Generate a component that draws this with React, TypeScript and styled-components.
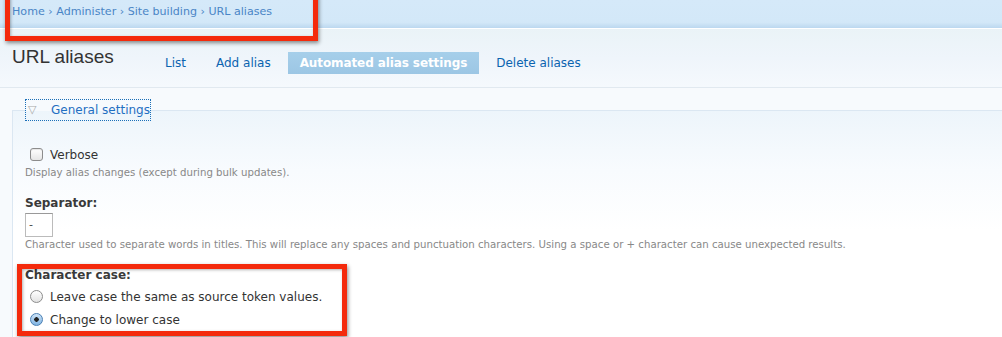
import styled, { createGlobalStyle } from 'styled-components';

const GlobalStyle = createGlobalStyle`
  html, body {
    margin: 0;
    padding: 0;
    background: #fff;
  }
  body {
    font-family: "DejaVu Sans", Verdana, sans-serif;
    color: #333;
    overflow: hidden;
  }
`;

const Page = styled.div`
  position: relative;
  width: 1002px;
  height: 337px;
  overflow: hidden;
  background: #fff;
`;

const Header = styled.div`
  height: 28px;
  border-bottom: 1px solid #fff;
  background: linear-gradient(to bottom, #d5e9f9 0%, #d3e8f8 80%, #bcd8ef 100%);
  display: flex;
  align-items: flex-start;
  padding-left: 12px;
`;

const Breadcrumb = styled.div`
  font-size: 11.1px;
  line-height: 12px;
  margin-top: 6px;
  color: #4a85c6;
`;

const TitleBar = styled.div`
  height: 58px;
  border-bottom: 1px solid #e1e9f0;
  background: linear-gradient(to bottom, #eaf3f7 0%, #eff5fb 50%, #f5f9fd 100%);
  display: flex;
  align-items: flex-start;
  padding-left: 12px;
`;

const Title = styled.h1`
  margin: 17px 0 0;
  font-family: "Liberation Sans", Arial, sans-serif;
  font-weight: normal;
  font-size: 19px;
  line-height: 22px;
  color: #333;
  width: 140px;
`;

const Tabs = styled.ul`
  list-style: none;
  margin: 23px 0 0;
  padding: 0;
  display: flex;
`;

const Tab = styled.li<{ $active?: boolean }>`
  height: 22px;
  padding: 0 ${(p) => (p.$active ? '12px' : '13px')};
  display: flex;
  align-items: center;
  font-size: 12px;
  letter-spacing: ${(p) => (p.$active ? '-0.1px' : '0')};
  color: ${(p) => (p.$active ? '#fff' : '#0b64b0')};
  font-weight: ${(p) => (p.$active ? 'bold' : 'normal')};
  background: ${(p) => (p.$active ? 'linear-gradient(to bottom, #a6cfea, #9cc6e4)' : 'transparent')};
  margin-right: 4px;
`;

const Content = styled.div`
  padding: 12px 0 0 12px;
  background: #f7fafd;
`;

const Fieldset = styled.fieldset`
  margin: 0;
  padding: 23px 0 40px 12px;
  border: none;
  border-top: 1px solid #dbe7f2;
  border-left: 1px solid #dbe7f2;
  background: linear-gradient(to bottom, #edf5fb 0px, #f8fbfe 60px, #fff 120px);
`;

const Legend = styled.legend`
  margin-left: 1px;
  padding: 3px 0 3px 2px;
  outline: 1px dotted #1a6fb8;
  font-size: 12px;
  line-height: 14px;
  color: #1f6fc2;
  display: flex;
  align-items: center;
  width: 122px;
`;

const Arrow = styled.span`
  color: #aaa;
  font-size: 11px;
  width: 23px;
`;

const Item = styled.div`
  margin-bottom: 16px;
`;

const OptionRow = styled.label`
  display: flex;
  align-items: center;
  gap: 7px;
  font-size: 12px;
  line-height: 16px;
  color: #333;
  padding-left: 5px;
  height: 23px;
`;

const Checkbox = styled.span`
  width: 11px;
  height: 11px;
  border: 1px solid #8c8c8c;
  border-radius: 3px;
  background: linear-gradient(to bottom, #fff, #e6e6e6);
  box-shadow: inset 0 1px 1px rgba(0, 0, 0, 0.1);
`;

const Radio = styled.span<{ $checked?: boolean }>`
  width: 11px;
  height: 11px;
  border: 1px solid ${(p) => (p.$checked ? '#4a7fb3' : '#8c8c8c')};
  border-radius: 50%;
  background: ${(p) =>
    p.$checked
      ? 'radial-gradient(circle, #222 0 2px, transparent 2.5px), linear-gradient(to bottom, #cfe4f7, #7fb3e2)'
      : 'linear-gradient(to bottom, #fff, #e2e2e2)'};
`;

const Description = styled.div`
  font-size: 10.2px;
  line-height: 13px;
  color: #888;
`;

const Label = styled.div`
  font-size: 12px;
  line-height: 16px;
  font-weight: bold;
  color: #3a3a3a;
  margin-bottom: 2px;
`;

const TextInput = styled.div`
  width: 28px;
  height: 24px;
  border: 1px solid #bbb;
  border-top-color: #999;
  background: #fff;
  font-size: 11px;
  line-height: 21px;
  padding-left: 3px;
  box-sizing: border-box;
  color: #444;
  margin-bottom: 1px;
`;

const Annotation = styled.div`
  position: absolute;
  border: 5px solid #f42a0c;
  box-shadow: 1px 2px 4px rgba(0, 0, 0, 0.45), inset 1px 1px 3px rgba(0, 0, 0, 0.3);
  pointer-events: none;
`;

export default function App() {
  return (
    <Page>
      <GlobalStyle />
      <Header>
        <Breadcrumb>Home › Administer › Site building › URL aliases</Breadcrumb>
      </Header>
      <TitleBar>
        <Title>URL aliases</Title>
        <Tabs>
          <Tab>List</Tab>
          <Tab>Add alias</Tab>
          <Tab $active>Automated alias settings</Tab>
          <Tab>Delete aliases</Tab>
        </Tabs>
      </TitleBar>
      <Content>
        <Fieldset>
          <Legend>
            <Arrow>▽</Arrow>General settings
          </Legend>
          <Item>
            <OptionRow>
              <Checkbox />
              Verbose
            </OptionRow>
            <Description>Display alias changes (except during bulk updates).</Description>
          </Item>
          <Item>
            <Label>Separator:</Label>
            <TextInput>-</TextInput>
            <Description>
              Character used to separate words in titles. This will replace any spaces and punctuation characters. Using a
              space or + character can cause unexpected results.
            </Description>
          </Item>
          <Item>
            <Label>Character case:</Label>
            <OptionRow>
              <Radio />
              Leave case the same as source token values.
            </OptionRow>
            <OptionRow>
              <Radio $checked />
              Change to lower case
            </OptionRow>
          </Item>
        </Fieldset>
      </Content>
      <Annotation style={{ left: 5, top: -10, width: 303, height: 41 }} />
      <Annotation style={{ left: 17, top: 264, width: 320, height: 62 }} />
    </Page>
  );
}
